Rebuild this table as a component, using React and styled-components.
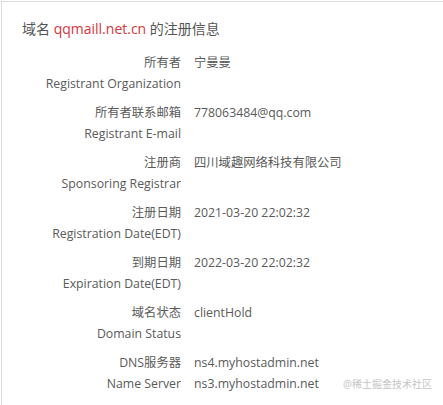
import React from "react";
import styled, { createGlobalStyle } from "styled-components";

const GlobalStyle = createGlobalStyle`
  body {
    margin: 0;
    background: #fff;
    font-family: "Open Sans", "Noto Sans CJK SC", sans-serif;
  }
`;

const rows = [
  { cn: "所有者", en: "Registrant Organization", values: ["宁曼曼"] },
  { cn: "所有者联系邮箱", en: "Registrant E-mail", values: ["778063484@qq.com"] },
  { cn: "注册商", en: "Sponsoring Registrar", values: ["四川域趣网络科技有限公司"] },
  { cn: "注册日期", en: "Registration Date(EDT)", values: ["2021-03-20 22:02:32"] },
  { cn: "到期日期", en: "Expiration Date(EDT)", values: ["2022-03-20 22:02:32"] },
  { cn: "域名状态", en: "Domain Status", values: ["clientHold"] },
  { cn: "DNS服务器", en: "Name Server", values: ["ns4.myhostadmin.net", "ns3.myhostadmin.net"] },
];

export default function App() {
  return (
    <>
      <GlobalStyle />
      <Panel>
        <Title>
          域名 <Domain>qqmaill.net.cn</Domain> 的注册信息
        </Title>
        <List>
          {rows.map((row) => (
            <Row key={row.en}>
              <Label>
                <Line>{row.cn}</Line>
                <Line>{row.en}</Line>
              </Label>
              <Value>
                {row.values.map((v) => (
                  <Line key={v}>{v}</Line>
                ))}
              </Value>
            </Row>
          ))}
        </List>
        <Watermark>@稀土掘金技术社区</Watermark>
      </Panel>
    </>
  );
}

const Panel = styled.div`
  position: relative;
  margin: 1px 0 0 1px;
  height: 404px;
  box-sizing: border-box;
  border-top: 1px solid #dcdcdc;
  border-left: 1px solid #dcdcdc;
  color: #5a5a5a;
`;

const Title = styled.div`
  padding: 17px 0 0 20px;
  font-size: 14px;
  line-height: 20px;
  color: #555;
`;

const Domain = styled.span`
  color: #d5363d;
`;

const List = styled.div`
  margin-top: 13px;
  display: flex;
  flex-direction: column;
  gap: 8px;
`;

const Row = styled.div`
  display: grid;
  grid-template-columns: 179px 1fr;
  column-gap: 13px;
  font-size: 12.3px;
`;

const Label = styled.div`
  text-align: right;
`;

const Value = styled.div``;

const Line = styled.div`
  line-height: 21px;
  white-space: nowrap;
`;

const Watermark = styled.div`
  position: absolute;
  left: 341px;
  top: 374px;
  font-size: 10px;
  color: #c4c4c4;
`;
